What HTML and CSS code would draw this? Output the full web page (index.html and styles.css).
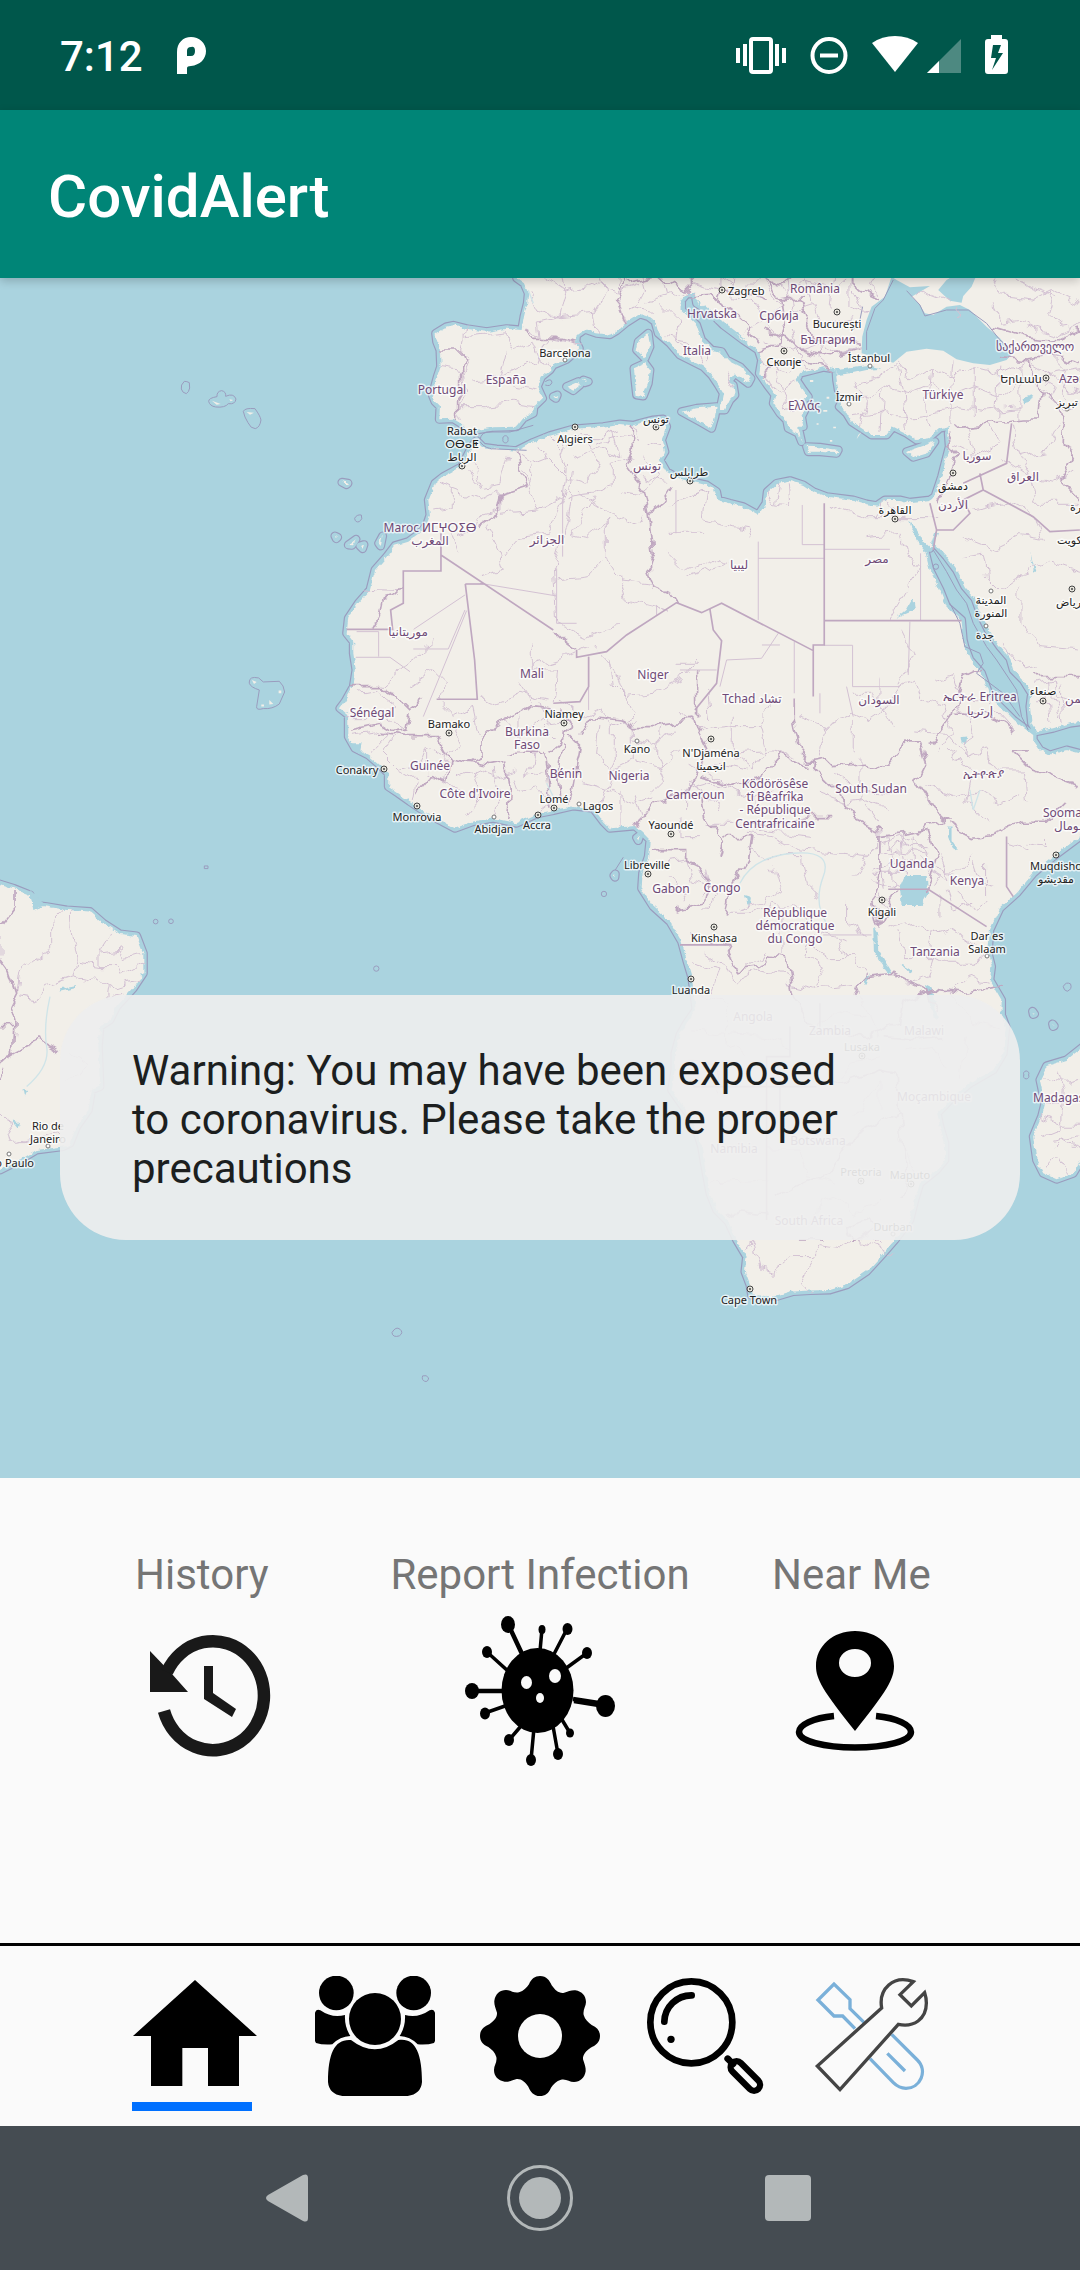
FILE: index.html
```html
<!DOCTYPE html>
<html lang="en">
<head>
<meta charset="utf-8">
<meta name="viewport" content="width=device-width, initial-scale=1">
<title>CovidAlert</title>
<link rel="stylesheet" href="styles.css">
</head>
<body>
<div class="status-bar">
  <span class="clock">7:12</span>
  <svg class="glyph" width="30" height="40" viewBox="0 0 30 40" aria-hidden="true"><path fill-rule="evenodd" d="M0 39V17C0 8 6 2 14 2S29 8 29 16 23 30 14 31Q10 31 10 33V39ZM14 12Q10 12 10 16V21H14Q18 21 18 16T14 12Z"/></svg>
  <div class="status-icons">
    <svg width="50" height="40" viewBox="0 0 50 40" aria-hidden="true"><path d="M0 13h4v15H0zM7 9h4v22H7zM39 9h4v22h-4zM46 13h4v15h-4z"/><rect x="15" y="4" width="20" height="33" rx="2" fill="none" stroke="#fff" stroke-width="4"/></svg>
    <svg width="38" height="40" viewBox="0 0 38 40" aria-hidden="true"><circle cx="19" cy="20.500" r="16.500" fill="none" stroke="#fff" stroke-width="4"/><path d="M10 18.500h18v4H10z"/></svg>
    <svg class="wifi" width="46" height="40" viewBox="0 0 46 40" aria-hidden="true"><path d="M23 37 0 8Q10 1 23 1T46 8Z"/></svg>
    <svg width="34" height="40" viewBox="0 0 34 40" aria-hidden="true"><path opacity=".3" d="M34 4V38H0Z"/><path d="M12 26V38H0Z"/></svg>
    <svg width="23" height="40" viewBox="0 0 23 40" aria-hidden="true"><path fill-rule="evenodd" d="M6 0h11v4h3q3 0 3 3v29q0 3-3 3H3q-3 0-3-3V7q0-3 3-3h3ZM8 10 6 23h5L7 35 18 18h-5l3-8Z"/></svg>
  </div>
</div>

<header class="app-bar"><h1>CovidAlert</h1></header>

<main>
<section class="map" aria-label="World map">
<svg class="map-canvas" viewBox="0 278 1080 1200" role="img" aria-label="Map of Africa, southern Europe and the Atlantic">
<defs>
  <filter id="wiggle" x="-5%" y="-5%" width="110%" height="110%" color-interpolation-filters="sRGB"><feTurbulence type="fractalNoise" baseFrequency="0.022" numOctaves="2" seed="4"/><feDisplacementMap in="SourceGraphic" scale="44" xChannelSelector="R" yChannelSelector="G"/></filter>
  <filter id="coast" x="-5%" y="-5%" width="110%" height="110%" color-interpolation-filters="sRGB"><feTurbulence type="fractalNoise" baseFrequency="0.05" numOctaves="3" seed="9"/><feDisplacementMap in="SourceGraphic" scale="16" xChannelSelector="R" yChannelSelector="G"/></filter>
  <path id="land" d="M1540-40 1550 24 1572 40 1585 70 1582 100 1572 140 1565 180 1520 176 1460 185 1400 176 1360 166 1340 170 1307 190 1310 215 1320 240 1322 290 1312 320 1297 375 1305 395 1320 410 1318 448 1360 446 1385 462 1402 480 1430 480 1480 472 1550 470 1570 445 1600 430 1602 410 1628 385 1612 350 1625 320 1650 300 1660 285 1700 268 1738 235 1728 215 1730 195 1755 178 1790 190 1830 194 1850 182 1880 157 1920 132 1945 140 1965 155 1975 190 2010 220 2040 255 2070 270 2110 290 2135 315 2155 345 2170 370 2160 420 2175 420 2190 390 2205 375 2200 345 2185 335 2205 310 2245 340 2253 325 2220 290 2180 270 2165 245 2135 240 2105 210 2090 165 2070 145 2045 120 2045 90 2060 72 2085 72 2090 100 2130 125 2170 165 2230 210 2275 240 2285 270 2278 310 2302 345 2325 375 2320 400 2340 430 2360 450 2365 475 2395 490 2405 515 2395 470 2410 470 2405 440 2415 420 2410 390 2425 380 2410 360 2390 330 2400 310 2440 300 2470 292 2508 298 2510 330 2515 360 2530 385 2518 410 2540 430 2555 455 2585 475 2615 495 2660 495 2680 470 2720 490 2750 510 2785 505 2820 475 2852 468 2845 490 2848 530 2835 580 2825 620 2805 680 2790 690 2730 697 2700 690 2655 690 2630 707 2600 702 2560 690 2480 680 2440 665 2410 645 2370 632 2330 640 2302 665 2298 700 2275 735 2230 710 2190 700 2155 690 2150 665 2120 645 2075 635 2035 625 2000 605 1980 570 1995 545 1985 510 2000 470 1990 447 1960 450 1920 460 1900 466 1860 462 1810 470 1720 477 1650 497 1600 517 1550 542 1490 537 1450 532 1430 512 1415 530 1400 560 1385 590 1330 620 1305 640 1285 690 1290 735 1280 765 1260 790 1225 815 1185 827 1160 860 1125 900 1110 960 1075 1000 1045 1045 1040 1090 1060 1115 1060 1150 1068 1200 1060 1250 1035 1295 1020 1315 1045 1335 1045 1400 1065 1435 1105 1455 1140 1485 1165 1510 1165 1550 1195 1570 1230 1595 1290 1635 1365 1675 1420 1655 1480 1645 1550 1660 1610 1632 1660 1622 1720 1608 1780 1615 1810 1655 1830 1675 1905 1668 1925 1685 1950 1710 1945 1760 1928 1810 1925 1855 1960 1910 2010 1955 2045 2015 2060 2070 2075 2120 2082 2170 2088 2220 2060 2260 2040 2295 2025 2350 2025 2400 2015 2460 2050 2510 2080 2550 2105 2630 2115 2690 2130 2770 2150 2820 2185 2855 2210 2910 2240 2960 2235 3005 2250 3045 2255 3075 2330 3080 2380 3065 2430 3062 2490 3060 2540 3045 2600 3005 2650 2950 2685 2910 2730 2850 2745 2790 2760 2740 2810 2700 2835 2670 2835 2620 2820 2570 2812 2530 2850 2490 2910 2440 2980 2400 3010 2350 3018 2270 3005 2235 3005 2190 2970 2130 2975 2090 2965 2050 2970 1980 3000 1915 3050 1870 3100 1810 3160 1760 3240 1700 3320 1620V1455L3240 1450 3200 1440 3150 1455 3120 1440 3100 1410 3100 1395 3080 1380 3040 1350 3000 1310 2970 1280 2945 1210 2910 1170 2895 1130 2890 1110 2885 1050 2840 1010 2820 960 2790 900 2775 840 2750 810 2728 755 2740 765 2770 815 2790 835 2805 790 2815 785 2805 820 2840 860 2870 900 2895 950 2925 985 2945 1040 2965 1080 3000 1130 3030 1165 3040 1200 3070 1230 3095 1270 3090 1310 3095 1360 3110 1385 3160 1375 3210 1360 3320 1345V-40Z
   M2045 425 2090 415 2150 410 2145 440 2135 475 2100 455Z
   M1902 295 1935 280 1950 300 1945 340 1930 378 1910 375 1905 330Z
   M1945 190 1950 230 1935 265 1910 240 1915 215Z
   M1700 350 1735 335 1740 345 1720 362ZM1750 330 1765 335 1755 338ZM1660 380 1672 375 1668 385Z
   M2420 530 2460 532 2515 540 2510 550 2460 545 2425 545Z
   M2720 545 2750 535 2805 515 2780 550 2740 562Z
   M3250 2330 3200 2370 3140 2388 3120 2430 3135 2500 3125 2540 3100 2600 3110 2670 3130 2710 3170 2728 3220 2710 3250 2660Z
   M-40 1830 40 1855 90 1875 100 1905 140 1910 200 1920 270 1925 310 1960 360 1992 410 1998 430 2050 430 2110 400 2155 350 2210 330 2250 300 2270 295 2330 300 2450 275 2460 265 2520 230 2570 210 2620 190 2630 110 2640 60 2670 0 2700-40 2710Z
   M1026 637 1044 640 1040 644ZM1005 798 1013 802 1009 806ZM1045 825 1068 808 1056 826ZM1080 828 1092 824 1088 836ZM1136 820 1148 798 1142 828Z
   M1910 1703 1920 1696 1915 1712ZM1842 1817 1846 1812 1845 1822ZM3098 2224 3104 2232 3100 2234ZM3158 2262 3163 2268 3160 2270Z"/>
  <path id="blacksea" d="M2675 20 2655 80 2615 110 2600 150 2587 200 2585 250 2680 278 2720 245 2780 236 2830 242 2870 268 2920 280 2970 285 3020 270 3038 250 3000 205 2960 170 2910 120 2880 105 2840 110 2800 135 2775 130 2760 105 2735 80 2790 48 2730 52 2690 30ZM2815 60 2840 30 2865 15 2930 15 2915 50 2890 78 2885 98 2850 92Z"/>
</defs>
<rect class="sea" x="0" y="278" width="1080" height="1200"/>
<g transform="translate(0 270) scale(.3333)">
  <use href="#land" class="limit"/><use href="#land" class="shelf"/>
  <g filter="url(#coast)"><use href="#land" class="ground"/></g>
  <use href="#blacksea" class="sea"/>
  <g class="sea" filter="url(#coast)">
    <path d="M2508 298 2560 290 2600 286 2645 296 2600 300 2555 310 2510 315ZM2700 1850 2715 1815 2780 1815 2785 1870 2765 1905 2705 1905ZM2620 1970 2632 1990 2635 2040 2680 2115 2660 2105 2622 2050ZM2845 1670 2855 1670 2855 1710 2872 1735 2862 1738 2845 1700ZM2690 1045 2720 1020 2740 985 2745 1020 2710 1035ZM2882 1402 2902 1400 2898 1422 2885 1420ZM2775 2145 2795 2155 2815 2250 2800 2240ZM2590 2130 2610 2110 2600 2145ZM2700 2080 2740 2105 2730 2110ZM1055 1420 1085 1420 1080 1450 1062 1445ZM2235 1875 2250 1880 2245 1910ZM3065 385 3100 375 3090 395 3070 400ZM3090 845 3100 880 3110 900 3102 905ZM180 2155 230 2145 225 2155 182 2165Z"/>
    <path d="M90 1860 140 1905 100 1920ZM2085 85 2130 120 2190 170 2240 210 2200 190 2120 140ZM2420 330 2440 350 2425 335ZM35 2550 60 2560 55 2575ZM70 2455 82 2465 75 2480Z"/>
  </g>
  <g class="ground"><path d="M2430 330h10v6h-10zM2470 420h12v5h-12zM2500 470h8v5h-8zM2530 400h8v5h-8zM2450 460h6v4h-6zM2490 510h7v5h-7zM2480 380h8v6h-8zM2575 495 2585 485 2570 508ZM636 392 662 402 650 404ZM688 388 700 390 692 394ZM740 426 762 428 750 434ZM756 1230 770 1236 762 1242ZM836 1262h8v8h-8zM808 1290 820 1302 808 1304ZM784 1304h8v6h-8z"/></g>

  <g class="shore">
    <path d="M2588 110 2580 150 2560 180M2680 30 2650 90 2625 115 2600 185 2600 240M2720 62 2760 105 2775 138 2840 120 2905 120 2960 160 3000 210 3040 245"/>
    <path d="M553 334q8 0 15 4l1 16q-2 12-10 17-12-2-15-14t9-23ZM626 394q0-10 25-14-1-16 14-18 14 3 12 17 24-11 31 8-2 17-23 14-10 13-38 10-18-3-21-17ZM730 424q5-11 35-8 16 22 18 34-3 22-17 26-14 0-22-18-11-17-14-34ZM1064 745q6-12 20-10 6 13-6 20-12 4-14-10ZM748 1236q0-18 28-12l14 12 48-2q14 12 16 32l-16 36q-20 16-48 14-22 6-20-6l8-50q-26-8-30-20Z"/>
    <path d="M460 1955a7 7 0 1 0 14 0a7 7 0 1 0-14 0M506 1954a7 7 0 1 0 14 0a7 7 0 1 0-14 0M1121 2096a8 8 0 1 0 16 0a8 8 0 1 0-16 0M613 1788h11v8h-11zM1804 1872a8 8 0 1 0 16 0a8 8 0 1 0-16 0M1846 1800l24-38M3072 2415a8 8 0 1 0 14 0a8 8 0 1 0-14 0M3190 2150q8-16 22-8 6 16-10 22-10-2-12-14ZM1176 3188q12-20 24-10 12 10-2 20-20 6-22-10ZM1268 3318q12-4 18 6-2 14-12 10-10-4-6-16ZM2890 3650q14-14 26 0M1636 335q18-12 20 2-4 14-20 8M1509 508a8 8 0 1 0 15 0a8 8 0 1 0-15 0M2800 890a8 8 0 1 0 16 0a8 8 0 1 0-16 0"/>
    <path d="M2800 840 2840 905 2870 960 2900 1000 2920 1060 2960 1130 2990 1170 3050 1260 3065 1340 3085 1380M2850 1000 2880 1060 2895 1130 2940 1150 2950 1180 2930 1210 2970 1240 3010 1270 3060 1340M1440 510q4-26 30-24h60l70-20M1440 515q16 24 50 22l90 4"/>
  </g>

  <g class="minor" filter="url(#wiggle)">
    <path d="M1400 170 1385 235 1410 260 1390 310 1400 360 1370 420 1385 455M1400 200 1520 185 1540 240 1600 220 1620 270 1560 290 1500 320 1420 330M1520 240 1500 320 1560 350 1620 360M1380 410 1460 410 1540 400 1600 410M1320 290 1390 300M1570 180 1620 200 1680 210 1740 225M1640 210 1620 260 1650 300M1590 70 1610 120 1680 140 1700 50 1690-20M1680 140 1780 130 1820 60 1800-20M1620 200 1615 150 1680 135M1780 130 1790 185M1640 20 1700 60 1780 40 1850 60 1920 40M1850-20 1860 100 1880 150M1920-20 1940 60 1900 120 1960 130M1980-20 2000 80 1940 100M2000 80 2080 60M1980 100 2040 160 2030 210 2080 250M2060-20 2080 40 2160 60 2160-20M2160 20 2230 70 2280 20 2360 60 2420 30 2500 60 2560 10M2200-10 2190 80 2260 90 2290 150 2240 180M2290 30 2340 110 2300 160 2340 210M2360 10 2380 120 2440 100 2460 160 2560 140M2420 20 2440 100M2500 0 2490 120M2550 0 2550 110 2600 130M2300 210 2380 250 2460 220 2520 250 2580 230M2380 180 2400 270 2440 300M2460 200 2470 290M2280 270 2340 310 2400 270M2300 310 2330 370 2380 340M2330 300 2360 420 2400 400M2000 200 2060 210 2100 280M2180 300 2200 350M2110 270 2130 240"/>
    <path d="M2560 340 2640 320 2690 280 2730 330 2790 290 2860 320 2920 290 3000 310 3080 270 3150 310 3260 290M2520 380 2600 390 2650 350 2720 370 2790 340 2850 380 2920 350 3000 380 3060 330 3140 360M2580 470 2600 400 2560 320M2640 480 2650 350M2720 490 2710 370 2690 290M2790 480 2780 400 2790 290M2850 470 2850 380 2860 270M2920 440 2920 290M2990 440 3000 290M3060 450 3060 280M2560 440 2640 430 2720 440 2800 430 2880 410 2960 420 3060 410M3080 170 3180 200 3260 160M2960 0 3000 80 3100 90 3160 60 3240 100M2980 100 3010 160 3070 150 3120 190M3160 60 3140 130 3200 180M3020 0 3090 50 3170 80M2900 470 2920 560 3000 520 2970 460M3040 470 3060 560 3140 540 3180 460M3060 560 3090 620 3160 640 3220 600M3000 560 3090 620 3110 700 3240 700M2860 520 2900 540M2880 800 2980 840 3060 800 3130 810 3110 740 3020 700 2920 720M2880 860 2950 850 2960 920 3000 960 3070 910 3150 880 3240 910M3060 950 3060 1050 3120 1130 3240 1140M3010 1120 3080 1200 3110 1190"/>
    <path d="M3110 320 3160 350 3140 390 3200 420 3240 400M3130 300 3180 330 3200 380M3160 260 3200 300 3190 350 3240 370M3100 1240 3160 1230 3170 1280 3220 1290M3110 1290 3160 1280 3180 1330M3140 1230 3150 1350M3180 1250 3190 1360M2590 120 2560 60M2640 80 2600 50 2620 0M2870 150 2880 105M2740 80 2800 70 2850 90"/>
    <path d="M1300 720 1360 710 1360 660 1320 640M1400 600 1440 650 1500 640 1520 560M1360 660 1440 690 1500 660 1500 720 1430 740 1420 780 1380 800M1440 650 1420 580M1560 560 1590 580 1640 560 1620 520M1590 580 1600 610 1580 660M1640 560 1700 620 1680 560 1700 490M1700 620 1760 640 1800 570 1760 520M1720 560 1800 530 1860 560 1840 480M1780 520 1860 500 1920 510 1900 470M1700 680 1780 670 1840 650 1840 580 1900 560M1860 660 1920 670 1980 620 1930 560M1920 620 2000 640M1940 520 1980 530M1640 500 1680 540 1740 500 1800 500 1860 480M1500 730 1620 720 1690 680 1700 580M1460 770 1500 850 1515 900 1440 920M1515 855 1560 800 1640 790 1700 660M1620 720 1570 600M1720 600 1700 760 1660 890 1670 1060 1760 1100 1800 1080 1860 1070M1740 670 1880 760 1930 740M1780 680 1720 790 1760 800 1820 750M1816 750 1816 860 1860 930 1960 940 1960 960M1670 930 1760 920 1820 860M1860 920 1880 990 1960 1010 2010 1030M2000 840 2060 900 2160 860 2180 880 2060 920M2120 660 2110 750 2200 770 2260 780 2250 800M2000 790 2110 790M2010 700 2060 690 2120 660M2300 670 2320 700 2370 710 2365 640M2340 640 2330 700M2480 700 2600 740 2730 740 2820 740M2600 800 2700 790 2720 850 2760 900 2720 960 2660 1060M2630 740 2660 700 2710 740M1080 960 1200 965M1360 790 1380 850M1310 1110 1200 1200 1140 1250M1230 1250 1300 1200 1330 1230 1320 1290M1080 1270 1130 1260 1190 1310 1150 1330M1050 1340 1160 1340 1220 1380M1050 1390 1130 1380 1170 1390 1120 1440M1180 1400 1150 1450 1200 1500 1260 1480 1280 1430 1340 1460 1390 1420 1360 1360M1200 1500 1250 1530 1240 1590M1280 1430 1280 1510 1340 1530M1340 1460 1330 1540 1380 1560M1440 1280 1480 1300 1560 1270 1640 1290M1320 1300 1360 1340 1420 1310 1440 1400M1380 1520 1440 1500 1490 1520 1550 1500M1420 1500 1450 1580 1400 1640M1480 1500 1500 1600 1480 1640M1540 1520 1550 1570 1610 1560 1650 1600 1610 1630M1600 1450 1580 1520 1640 1510"/>
    <path d="M1510 1350 1560 1400 1620 1350 1670 1400M1560 1340 1560 1440M1620 1300 1640 1360 1710 1350M1680 1300 1760 1340 1800 1320 1840 1370 1900 1340 1880 1290 1850 1200 1780 1120M1800 1360 1790 1460 1840 1500 1900 1470 1980 1490 2040 1440M1840 1370 1840 1500 1820 1560 1900 1600 1960 1580M1900 1360 1900 1470M1980 1370 1970 1450 2000 1530 1960 1570M1750 1540 1820 1560 1800 1620M1860 1560 1860 1660M1900 1570 1920 1650M2040 1380 1960 1420 1900 1410M1880 1280 1960 1270 2040 1230 2100 1160M2030 1180 2100 1180M1600 1130 1600 1200 1670 1200 1660 1300M1560 1240 1600 1300M1760 1130 1700 1160 1600 1190M1830 1160 1840 1240 1880 1280M2060 1480 2140 1520 2200 1560M2100 1490 2160 1480 2240 1500M2040 1330 2110 1380 2200 1370 2280 1370 2320 1290M2130 1350 2120 1260M2200 1330 2200 1450 2260 1500M2280 1370 2300 1450 2260 1500M2120 1440 2200 1450 2320 1440 2380 1460M2050 1560 2120 1540 2200 1560 2260 1590 2320 1560M2400 1340 2480 1370 2560 1330 2600 1350 2660 1310 2700 1250 2740 1230M2480 1370 2460 1460M2560 1350 2560 1450M2560 1270 2620 1270 2680 1370M2640 1300 2640 1220M2700 1240 2740 1160 2700 1080M2800 1240 2860 1220 2880 1280 2960 1290M2740 1230 2760 1290 2830 1310 2860 1380 2810 1450M2740 1380 2840 1390 2900 1460 2960 1440 3000 1500M2780 1550 2860 1580 2940 1560 3000 1600 3060 1570M2840 1440 2920 1500 2900 1590 2960 1660M2900 1460 2920 1350 2860 1310M3000 1500 3070 1500 3080 1600M2960 1290 3040 1380M2500 1510 2580 1560 2680 1570M2460 1570 2540 1600 2600 1590 2660 1610M2600 1600 2640 1660M2580 1460 2580 1600"/>
    <path d="M2120 1660 2200 1660 2280 1680 2360 1690 2440 1700M2240 1690 2320 1700 2400 1740 2520 1750 2600 1760M2240 1740 2300 1760 2400 1760 2420 1840 2460 1880M2320 1790 2340 1860 2280 1900 2210 1920M2180 1930 2260 1930 2320 1900 2400 1920 2460 1990 2540 2010M2340 1940 2340 2060M2400 2000 2480 2060 2560 2060 2600 2110M2540 1900 2540 1960 2600 2000M2560 1820 2600 1760 2640 1720 2640 1680M2440 1990 2420 2060 2480 2100 2440 2160M2520 2010 2540 2060M2660 1980 2740 1960 2800 2000 2860 1980 2920 2020M2700 1990 2720 2060 2800 2060 2780 2120 2720 2140M2800 2000 2780 2050 2840 2080 2920 2080 2960 2060M2880 1860 2920 1920 2960 1890M2820 1870 2820 1940M2920 1780 2940 1840 3000 1850M2960 1780 2960 1880M3080 1720 3140 1730 3140 1700M3020 1720 3080 1740M2920 1760 2880 1800 2840 1800 2820 1750M2840 1860 2860 1920 2920 1900M2000 1780 2060 1770 2080 1830 2140 1850M2010 1820 2060 1860 2040 1900M2100 1800 2160 1880 2110 1920M1980 1860 2060 1870M2120 1790 2130 1840 2100 1880M2040 1640 2040 1700 2100 1700M2060 1620 2060 1540 2110 1560 2160 1620M2080 2080 2160 2100 2140 2170M2120 2050 2180 2090 2200 2140 2280 2100 2360 2120M2240 2090 2300 2050M2360 2140 2440 2160 2560 2150M2860 2160 2900 2120 2960 2140"/>
    <path d="M2640 1720 2700 1700 2760 1720 2780 1760M2660 1700 2680 1760 2720 1790M2700 1690 2710 1760 2760 1790M2740 1700 2740 1780M2640 1750 2700 1740 2780 1750M2620 1800 2680 1780 2720 1810M2640 1790 2650 1850M2670 1780 2680 1850M2620 1830 2700 1850M2780 1780 2820 1820 2800 1850M2790 1800 2850 1830 2830 1780M2630 1860 2660 1920M2620 1890 2670 1890M2690 1700 2730 1730 2780 1730M2660 1730 2720 1720M2750 1760 2810 1790 2860 1810M2620 1810 2700 1810"/>
    <path d="M2100 2180 2180 2200 2180 2320 2240 2360M2180 2290 2300 2300 2370 2330M2080 2280 2180 2290M2050 2380 2140 2380 2160 2470M2500 2440 2560 2380 2640 2360M2440 2280 2520 2220 2600 2240M2560 2150 2600 2210 2640 2300M2720 2340 2800 2330 2840 2400M2840 2160 2920 2260 3000 2280M2900 2300 2880 2420M2120 2740 2300 2730M2560 2540 2640 2440 2640 2520M2300 2640 2400 2640 2420 2720 2520 2740M2440 2870 2460 2800 2520 2780 2560 2830 2640 2800M2700 2600 2740 2700 2780 2720M2230 2940 2260 2920 2280 3000 2320 3010 2380 2960 2440 2960 2460 2930 2520 2940 2600 2900M2440 2970 2400 3040 2430 3070M2560 2910 2600 2920 2680 2950M2620 2910 2640 2920"/>
    <path d="M3140 2420 3200 2440 3250 2430M3140 2500 3250 2490M3170 2400 3190 2460 3180 2580 3130 2600M3120 2540 3180 2560 3250 2560M3160 2640 3190 2610 3240 2640M3180 2660 3200 2720M3140 2700 3170 2660M3160 2620 3250 2600"/>
    <path d="M185 1925 155 1960 155 2040 110 2060 60 2100 50 2170M210 1925 215 2000 235 2070 225 2120 130 2150 110 2190 60 2180M335 1995 300 2050 300 2090 240 2080M300 2050 360 2040 370 2060 430 2050M300 2090 350 2090 360 2120 430 2080M225 2120 260 2130 280 2120 330 2150 380 2140 420 2130M325 2150 320 2180 370 2170M210 2350 260 2380 240 2420 190 2440M30 2620 60 2620 180 2590M0 2520 20 2540 40 2620M0 2000 0 2060"/>
  </g>
  <g class="minor">
    <path d="M1241 1078 1395 975M1400 1022 1270 1340M1070 1085 1136 1085 1136 1160M1068 1162 1170 1162 1230 1205M1670 895V1060H1730M1970 1035V1005M1440 940 1670 978M2028 660V790M2275 865H2473M2275 815V1050M2407 705V824H2473M2473 838H2670M2762 850V1052M2730 1055 2725 1215M2558 1126V1250H2700M2473 1126H2558M2335 1090 2285 1165 2180 1170 2160 1250M2383 1115V1270M2286 1125H2340M1766 1160V1320M1240 1137H1345L1395 1020M2470 1995H2615M2040 1200H2150M1688 690V860M2460 1270V1330M2540 1250 2560 1340"/>
  </g>
  <g class="major" filter="url(#wiggle)">
    <path d="M1320 240 1395 240 1400 270 1385 290 1385 370 1370 400 1370 450M1565 180 1600 205 1680 205 1730 220M1880 160 1850 90 1870 40 1840-20M1880 40 1960 20 2050 60 2100 10M2060 75 2130 70 2160 100 2170 60 2250 70 2300 90M2160 100 2240 160 2280 220M2300 30 2340 90 2420 80M2280 20 2340 50 2400 0M2290 180 2360 200 2400 240 2500 260 2580 235M2340 90 2350 180M2275 240 2340 220 2350 170M2290 310 2340 280 2420 270 2500 300M2400 80 2440 200 2580 220M2540 20 2580 60 2640 90M2860 470 2960 460 3080 450 3120 450 3130 370 3080 270 3000 260M2980 170 3080 200 3180 210 3240 180M3080 270 3160 260 3240 280M3130 370 3200 440 3190 510 3220 560 3180 630 3240 690M2840 500 2870 560 2840 630 2810 700"/>
    <path d="M1550 545 1560 600 1580 655 1500 680 1490 730 1430 770M1900 470 1900 540 1880 590 1930 660 1945 740M2015 650 1990 690 1965 710 1945 740 1960 850 1945 900 1965 950 2010 970 2030 1000M1210 950 1180 980 1150 990 1140 1040 1120 1075M1660 1080 1690 1110 1730 1140M1055 1250 1140 1250 1190 1280 1230 1320 1270 1290M1045 1380 1140 1360 1180 1385 1220 1380 1230 1330M1140 1390 1220 1400 1310 1400 1350 1470 1400 1480 1440 1460 1440 1410 1480 1370 1540 1340 1600 1310 1680 1320 1710 1360 1700 1400 1650 1440M1350 1470 1340 1540 1300 1510 1250 1570M1400 1480 1470 1490 1520 1480 1530 1580 1520 1650M1525 1450 1640 1450M1630 1440 1640 1500 1650 1610M1690 1420 1675 1500 1685 1600M1710 1400 1740 1430 1710 1600M1740 1400 1780 1340 1860 1350 1900 1370 1960 1370 2080 1350M2080 1350 2120 1430 2090 1500 2060 1570 1960 1600 1910 1670M2090 1210 2090 1340M2380 1280 2380 1350 2400 1440 2440 1490 2500 1550 2560 1640 2640 1680M2420 1480 2480 1470 2500 1490 2590 1480 2660 1490 2730 1410 2760 1410M2760 1410 2780 1480 2750 1540 2800 1620 2840 1650 2780 1660 2760 1690M2500 1640 2440 1640 2340 1660 2240 1660M2100 1520 2200 1550 2280 1520 2340 1450 2420 1490M2110 1560 2120 1640 2170 1720 2160 1760M1950 1745H2060V1770L2100 1790 2130 1830 2110 1900 2030 1920M2170 1700 2250 1700 2240 1780 2190 1860 2170 1940M2060 2000 2180 2030 2210 2100 2280 2090 2300 2060 2360 2070 2380 2180M2640 1700 2780 1680 2810 1760 2780 1860M2840 1660 2920 1700 2980 1690 3060 1660 3130 1660 3200 1590M2640 1700 2640 1800 2620 1880 2640 1970 2670 1900 2700 1860M2880 1240 2900 1220 2940 1200M2880 1240 2860 1330 2790 1430M2870 1330 2960 1330 3040 1380M3040 1440 3100 1500 3240 1550M3040 1440 3090 1440M2600 2120 2680 2110 2780 2160 2810 2230M2560 2180 2600 2110M2380 2180 2440 2280 2600 2300 2690 2260 2700 2200 2800 2160 2900 2170 3000 2150M2660 2300 2740 2310 2830 2300M2500 2440 2640 2400 2690 2410 2700 2530 2560 2600 2500 2700 2330 2780M2700 2530 2720 2700 2700 2790M2180 2840 2220 2820 2300 2830M2540 2880 2600 2840 2630 2870 2560 2920ZM2400 2910H2480M3100 1220 3240 1220"/>
    <path d="M45 1860 45 1910 0 1970M0 2070 30 2110 50 2170 30 2210 45 2260 40 2350 120 2310 180 2345M0 2270 40 2270M0 2380 45 2350M0 2440 20 2390"/>
  </g>
  <g class="major">
    <path d="M1323 790V903H1210V1000L1172 1020 1178 1078H1040M1323 855 1660 1080M1396 942H1456M1396 942 1424 1170 1432 1288H1310M1730 1140V1162L1820 1145 1880 1095 2030 998 2105 1028 2165 1000 2440 1142M2440 1142V1125H2473V700M2473 1052H2885M2440 1140V1280M2130 1018 2140 1080 2165 1112 2150 1240 2085 1320M1766 1160V1250L1740 1295 1660 1300M2040 2025H2190M2665 1858H2785L2960 1970M3020 1700V1850L3040 1880M2790 700 2810 780 2860 780 2910 730 2890 690 2950 660 3100 740 3150 785 3240 780M2810 780 2800 840M2890 640 3020 580 3035 460M2950 660 2940 610M2370 2270V2360H2300V2850M2460 2200V2290M2340 2450V2590M2080 2450H2450"/>
  </g>
  <path class="river" d="M2220 1840Q2260 1760 2380 1750T2470 1820 2480 1960M150 2180Q130 2270 140 2330T80 2450M2910 1560 2920 1620 2940 1560M1640 1540 1670 1600M1585 60 1600 100"/>
</g>

<g class="capital">
  <circle cx="462" cy="466" r="3"/><circle cx="575" cy="427" r="3"/><circle cx="656" cy="427" r="3"/><circle cx="690" cy="481" r="3"/><circle cx="722" cy="290" r="3"/><circle cx="837" cy="312" r="3"/><circle cx="784" cy="351" r="3"/><circle cx="1046" cy="378" r="3"/><circle cx="953" cy="473" r="3"/><circle cx="895" cy="519" r="3"/><circle cx="1072" cy="589" r="3"/><circle cx="449" cy="733" r="3"/><circle cx="564" cy="723" r="3"/><circle cx="384" cy="769" r="3"/><circle cx="417" cy="806" r="3"/><circle cx="554" cy="808" r="3"/><circle cx="538" cy="815" r="3"/><circle cx="671" cy="834" r="3"/><circle cx="648" cy="874" r="3"/><circle cx="691" cy="979" r="3"/><circle cx="1043" cy="701" r="3"/><circle cx="711" cy="739" r="3"/><circle cx="1056" cy="855" r="3"/><circle cx="882" cy="900" r="3"/><circle cx="714" cy="927" r="3"/><circle cx="862" cy="1056" r="3"/><circle cx="861" cy="1181" r="3"/><circle cx="911" cy="1184" r="3"/><circle cx="750" cy="1289" r="3"/>
</g>
<g class="pip">
  <circle cx="462" cy="466" r="1"/><circle cx="575" cy="427" r="1"/><circle cx="656" cy="427" r="1"/><circle cx="690" cy="481" r="1"/><circle cx="722" cy="290" r="1"/><circle cx="837" cy="312" r="1"/><circle cx="784" cy="351" r="1"/><circle cx="1046" cy="378" r="1"/><circle cx="953" cy="473" r="1"/><circle cx="895" cy="519" r="1"/><circle cx="1072" cy="589" r="1"/><circle cx="449" cy="733" r="1"/><circle cx="564" cy="723" r="1"/><circle cx="384" cy="769" r="1"/><circle cx="417" cy="806" r="1"/><circle cx="554" cy="808" r="1"/><circle cx="538" cy="815" r="1"/><circle cx="671" cy="834" r="1"/><circle cx="648" cy="874" r="1"/><circle cx="691" cy="979" r="1"/><circle cx="1043" cy="701" r="1"/><circle cx="711" cy="739" r="1"/><circle cx="1056" cy="855" r="1"/><circle cx="882" cy="900" r="1"/><circle cx="714" cy="927" r="1"/><circle cx="862" cy="1056" r="1"/><circle cx="861" cy="1181" r="1"/><circle cx="911" cy="1184" r="1"/><circle cx="750" cy="1289" r="1"/>
</g>
<g class="town">
  <circle cx="565" cy="360" r="2"/><circle cx="870" cy="366" r="2"/><circle cx="849" cy="404" r="2"/><circle cx="991" cy="591" r="2"/><circle cx="986" cy="626" r="2"/><circle cx="637" cy="741" r="2"/><circle cx="579" cy="804" r="2"/><circle cx="494" cy="817" r="2"/><circle cx="987" cy="956" r="2"/><circle cx="893" cy="1234" r="2"/><circle cx="48" cy="1146" r="2"/><circle cx="9" cy="1154" r="2"/><circle cx="1067" cy="409" r="2"/>
</g>
<g class="label country" transform="translate(0 1)">
  <text x="506" y="383">España</text><text x="442" y="393">Portugal</text><text x="647" y="469">تونس</text><text x="430" y="531">Maroc ⵍⵎⵖⵔⵉⴱ</text><text x="430" y="544">المغرب</text><text x="547" y="543">الجزائر</text><text x="408" y="635">موريتانيا</text><text x="697" y="354">Italia</text><text x="815" y="292">România</text><text x="712" y="317">Hrvatska</text><text x="779" y="319">Србија</text><text x="828" y="343">България</text><text x="804" y="409">Ελλάς</text><text x="943" y="398">Türkiye</text><text x="1035" y="350">საქართველო</text><text class="from" x="1059" y="382">Azərbaycan</text><text x="977" y="459">سوريا</text><text x="1023" y="480">العراق</text><text x="953" y="508">الأردن</text><text x="739" y="568">ليبيا</text><text x="877" y="562">مصر</text>
  <text x="532" y="677">Mali</text><text x="653" y="678">Niger</text><text x="372" y="716">Sénégal</text><text x="527" y="735">Burkina</text><text x="527" y="748">Faso</text><text x="430" y="769">Guinée</text><text x="566" y="777">Bénin</text><text x="629" y="779">Nigeria</text><text x="475" y="797">Côte d'Ivoire</text><text x="671" y="892">Gabon</text><text x="752" y="702">Tchad تشاد</text><text x="879" y="703">السودان</text><text x="980" y="700">ኤርትራ Eritrea</text><text x="980" y="714">إرتريا</text><text class="from" x="1065" y="702">اليمن</text><text x="775" y="787">Ködörösêse</text><text x="775" y="800">tî Bêafrîka</text><text x="775" y="813">- République</text><text x="775" y="827">Centrafricaine</text><text x="695" y="798">Cameroun</text><text x="871" y="792">South Sudan</text><text x="983" y="777">ኢትዮጵያ</text><text class="from" x="1043" y="816">Soomaaliya</text><text class="from" x="1054" y="829">الصومال</text><text x="912" y="867">Uganda</text><text x="967" y="884">Kenya</text><text x="722" y="891">Congo</text><text x="795" y="916">République</text><text x="795" y="929">démocratique</text><text x="795" y="942">du Congo</text><text x="935" y="955">Tanzania</text>
  <text x="753" y="1020">Angola</text><text x="830" y="1034">Zambia</text><text x="924" y="1034">Malawi</text><text x="934" y="1100">Moçambique</text><text x="818" y="1144">Botswana</text><text x="734" y="1152">Namibia</text><text x="809" y="1224">South Africa</text><text class="from" x="1033" y="1101">Madagasikara</text>
</g>
<g class="label city" transform="translate(0 1)">
  <text x="565" y="356">Barcelona</text><text x="462" y="434">Rabat</text><text x="462" y="447">ⵔⴱⴰⵟ</text><text x="462" y="460">الرباط</text><text x="575" y="442">Algiers</text><text x="656" y="422">تونس</text><text x="689" y="475">طرابلس</text><text class="from" x="728" y="294">Zagreb</text><text x="837" y="327">București</text><text x="784" y="365">Скопје</text><text x="869" y="361">İstanbul</text><text x="849" y="400">İzmir</text><text x="1021" y="382">Երևան</text><text x="1067" y="405">تبریز</text><text x="953" y="489">دمشق</text><text x="895" y="513">القاهرة</text><text class="from" x="1070" y="510">البصرة</text><text class="from" x="1057" y="543">الكويت</text><text class="from" x="1056" y="605">الرياض</text><text x="991" y="603">المدينة</text><text x="991" y="616">المنورة</text><text x="985" y="638">جدة</text>
  <text x="449" y="727">Bamako</text><text x="564" y="717">Niamey</text><text x="637" y="752">Kano</text><text x="357" y="773">Conakry</text><text x="417" y="820">Monrovia</text><text x="554" y="802">Lomé</text><text x="598" y="809">Lagos</text><text x="494" y="832">Abidjan</text><text x="537" y="828">Accra</text><text x="671" y="828">Yaoundé</text><text x="647" y="868">Libreville</text><text x="691" y="993">Luanda</text><text x="1043" y="694">صنعاء</text><text x="711" y="756">N'Djaména</text><text x="711" y="769">انجمينا</text><text class="from" x="1030" y="869">Muqdisho</text><text x="1056" y="882">مقديشو</text><text x="882" y="915">Kigali</text><text x="714" y="941">Kinshasa</text><text x="987" y="939">Dar es</text><text x="987" y="952">Salaam</text>
  <text x="862" y="1050">Lusaka</text><text x="861" y="1175">Pretoria</text><text x="910" y="1178">Maputo</text><text x="893" y="1230">Durban</text><text x="749" y="1303">Cape Town</text><text x="48" y="1129">Rio de</text><text x="48" y="1142">Janeiro</text><text class="to" x="34" y="1166">São Paulo</text>
</g>
</svg>
<div class="toast" role="alert">Warning: You may have been exposed to coronavirus. Please take the proper precautions</div>
</section>

<section class="actions">
  <button class="action action-start" type="button">
    <span>History</span>
    <svg width="150" height="150" viewBox="-15 -18 150 150" aria-hidden="true"><g fill="#191919"><path d="M0 17 22 40 38 58H0ZM54 32H63V59L86 75 82 83 54 65Z"/><path d="M17 38A51 54.500 0 1 1 14 77" fill="none" stroke="#191919" stroke-width="12.500"/></g></svg>
  </button>
  <button class="action" type="button">
    <span>Report Infection</span>
    <svg width="150" height="150" viewBox="0 0 150 150" aria-hidden="true">
      <ellipse cx="72.500" cy="74.500" rx="36" ry="42.500"/>
      <path stroke="#000" stroke-width="4.500" d="M43 8 58 40M7 75H40M109 85 140 90M108 83 140 88"/>
      <path stroke="#000" stroke-width="3.500" d="M22 36 44 56M20 97 40 90M44 124 56 110M66 144 69 112M77 13 75 35M102 13 88 40M122 37 100 53M105 117 96 102M93 138 88 110"/>
      <ellipse cx="43" cy="8.500" rx="7" ry="8.500"/><ellipse cx="22" cy="36" rx="5" ry="6"/><ellipse cx="7" cy="75" rx="7" ry="8"/><ellipse cx="20" cy="97.500" rx="5" ry="6"/><ellipse cx="44" cy="124" rx="5" ry="6"/><ellipse cx="66" cy="144" rx="5" ry="6"/><ellipse cx="77" cy="13.500" rx="3.500" ry="4.500"/><ellipse cx="102.500" cy="13" rx="5" ry="6"/><ellipse cx="122" cy="37" rx="5" ry="6"/><ellipse cx="140.500" cy="90" rx="9.500" ry="11"/><ellipse cx="105" cy="117" rx="4" ry="4.500"/><ellipse cx="93" cy="138" rx="5" ry="6"/>
      <g fill="#fafafa"><ellipse cx="61.500" cy="66.500" rx="5.500" ry="6.500"/><ellipse cx="90" cy="60" rx="6" ry="7"/><ellipse cx="75" cy="82" rx="4" ry="5"/></g>
    </svg>
  </button>
  <button class="action action-start" type="button">
    <span>Near Me</span>
    <svg width="166" height="150" viewBox="-23 -15 166 150" aria-hidden="true"><path fill-rule="evenodd" d="M60 0C82 0 99 15 99 35 99 48 92 60 60 100 28 60 21 48 21 35 21 15 38 0 60 0ZM60 18A16 14 0 1 0 60 46 16 14 0 1 0 60 18Z"/><path d="M81 85C102 87 116 94 116 101 116 110 91 116.500 60 116.500S4 110 4 101C4 94 18 87 39 85" fill="none" stroke="#000" stroke-width="6.500"/></svg>
  </button>
</section>
</main>

<nav class="tabs" aria-label="Sections">
  <button class="tab tab-home" type="button" aria-label="Home" aria-current="page"><svg width="125" height="120" viewBox="-3 -12 375 360"><path d="M186 0 372 168H318V318H225V204H148V318H54V168H0Z"/></svg></button>
  <button class="tab" type="button" aria-label="People"><svg width="120" height="120" viewBox="0 0 360 360"><circle cx="64" cy="51" r="52"/><circle cx="296" cy="51" r="52"/><circle cx="180" cy="129" r="78"/><path d="M0 110Q3 98 16 103 52 128 90 117 88 152 106 180 75 181 52 205 22 207 3 201L0 195Z"/><path d="M360 110Q357 98 344 103 308 128 270 117 272 152 254 180 285 181 308 205 338 207 357 201L360 195Z"/><path d="M108 192Q180 248 250 192C300 184 321 230 321 318Q318 354 278 360H82Q42 354 39 318C39 230 60 188 108 192Z"/></svg></button>
  <button class="tab" type="button" aria-label="Settings"><svg width="120" height="120" viewBox="0 0 360 360"><path id="cog" d="M180 0C200 0 209 14 215 28 225 42 235 52 250 51 265 46 275 42 286 43 306 46 318 60 318 78 318 92 308 100 311 117 315 131 325 140 335 147 352 154 360 165 360 180L170 190Z"/><use href="#cog" transform="rotate(90 180 180)"/><use href="#cog" transform="rotate(180 180 180)"/><use href="#cog" transform="rotate(270 180 180)"/><circle cx="180" cy="180" r="66" fill="#fafafa"/></svg></button>
  <button class="tab" type="button" aria-label="Search"><svg width="120" height="120" viewBox="0 0 360 360"><g fill="none" stroke="#000" stroke-width="20" stroke-linecap="round"><circle cx="139" cy="139" r="123"/><path d="M58 137A81 81 0 0 1 140 58M248 248 264 264"/><rect x="246" y="282" width="110" height="36" rx="18" transform="rotate(45 301 300)" stroke-width="19"/></g><circle cx="78" cy="190" r="11"/></svg></button>
  <button class="tab" type="button" aria-label="Tools"><svg width="120" height="120" viewBox="0 0 360 360"><g fill="none" stroke-width="10"><path stroke="#7ab0d9" d="M135 158 98 120H72L24 72 72 24 120 71V98L162 139M245 175 322 252C355 285 330 337 288 337 270 337 260 330 250 320L180 248M232 232 285 285"/><path stroke="#444" d="M215 96 22 270 90 341 265 145C310 155 350 130 349 80Q349 65 344 50L304 90 270 56 310 17C250 -5 205 40 215 96Z"/></g></svg></button>
</nav>

<div class="system-bar">
  <button type="button" aria-label="Back"><svg width="66" height="66" viewBox="257 2165 66 66"><path d="M268 2195 303 2175Q308 2173 308 2178V2218Q308 2223 303 2221L268 2201Q264 2198 268 2195Z"/></svg></button>
  <button type="button" aria-label="Home screen"><svg width="66" height="66" viewBox="0 0 66 66"><circle cx="33" cy="33" r="21"/><circle cx="33" cy="33" r="31.500" fill="none" stroke="#b3b8b9" stroke-width="3"/></svg></button>
  <button type="button" aria-label="Overview"><svg width="66" height="66" viewBox="757 2165 66 66"><rect x="765" y="2175" width="46" height="46" rx="4"/></svg></button>
</div>
</body>
</html>
```
FILE: styles.css
```css
* { box-sizing: border-box; }

body {
  margin: 0;
  min-height: 100vh;
  display: flex;
  flex-direction: column;
  background: #fafafa;
  font-family: Roboto, sans-serif;
}

button {
  margin: 0;
  padding: 0;
  border: 0;
  background: none;
  font: inherit;
  color: inherit;
}

svg { display: block; }

.status-bar {
  display: flex;
  align-items: center;
  height: 110px;
  padding: 0 72px 0 60px;
  background: #00574b;
  color: #fff;
  fill: #fff;
}

.clock { padding-top: 3px; font-size: 42px; line-height: 48px; font-weight: 500; }
.glyph { margin-left: 34px; }

.status-icons {
  display: flex;
  gap: 24px;
  margin-left: auto;
}
.wifi { margin-right: -15px; }

.app-bar {
  position: relative;
  z-index: 1;
  display: flex;
  align-items: center;
  height: 168px;
  padding: 6px 48px 0;
  background: #008577;
  box-shadow: 0 3px 9px rgba(0, 0, 0, .2);
  color: #fff;
}
.app-bar h1 { margin: 0; font-size: 60px; line-height: 72px; font-weight: 500; }

main { flex: 1; display: flex; flex-direction: column; }

.map { position: relative; background: #aad3df; }
.map-canvas { width: 100%; height: auto; }

.sea { fill: #aad3df; }
.ground { fill: #f2efe9; }
.limit { fill: none; stroke: #9a9cbe; stroke-width: 27; stroke-linejoin: round; }
.shelf { fill: none; stroke: #aad3df; stroke-width: 20; stroke-linejoin: round; }
.shore { fill: none; stroke: #9a9cbe; stroke-width: 3; }
.minor { fill: none; stroke: #d3c1d3; stroke-width: 3; }
.major { fill: none; stroke: #bfa7c0; stroke-width: 5; }
.river { fill: none; stroke: #cfe4e8; stroke-width: 4; }

.capital { fill: #e8e6dd; stroke: #444; stroke-width: 1; }
.pip { fill: #444; }
.town { fill: #fff; stroke: #777; stroke-width: 1; }

.label {
  font-family: "Noto Sans", "DejaVu Sans", sans-serif;
  text-anchor: middle;
  paint-order: stroke;
  stroke: rgba(255, 255, 255, .7);
  stroke-width: 3px;
  stroke-linejoin: round;
}
.country { font-size: 12px; fill: #6f4a77; }
.city { font-size: 11px; fill: #222; }
.from { text-anchor: start; }
.to { text-anchor: end; }

.toast {
  position: absolute;
  left: 60px;
  right: 60px;
  bottom: 238px;
  padding: 51px 144px 47px 72px;
  border-radius: 66px;
  background: rgba(238, 238, 238, .92);
  color: #1c1f1f;
  font-size: 42px;
  line-height: 49px;
}

.actions {
  display: grid;
  grid-template-columns: 173px 1fr 173px;
  padding: 72px 135px 0;
}
.action {
  display: flex;
  flex-direction: column;
  align-items: center;
  gap: 17px;
  color: #757575;
  font-size: 42px;
  line-height: 49px;
  white-space: nowrap;
}
.action-start { align-items: flex-start; }

.tabs {
  display: flex;
  gap: 45px;
  height: 183px;
  padding: 30px 132px 0;
  border-top: 3px solid #000;
}
.tab { display: flex; flex-direction: column; gap: 6px; }
.tab-home { width: 138px; }
.tab-home::after { content: ""; width: 120px; height: 9px; background: #0070ff; }

.system-bar {
  display: flex;
  justify-content: center;
  align-items: center;
  gap: 184px;
  height: 144px;
  background: #454c52;
  fill: #b3b8b9;
}
```
